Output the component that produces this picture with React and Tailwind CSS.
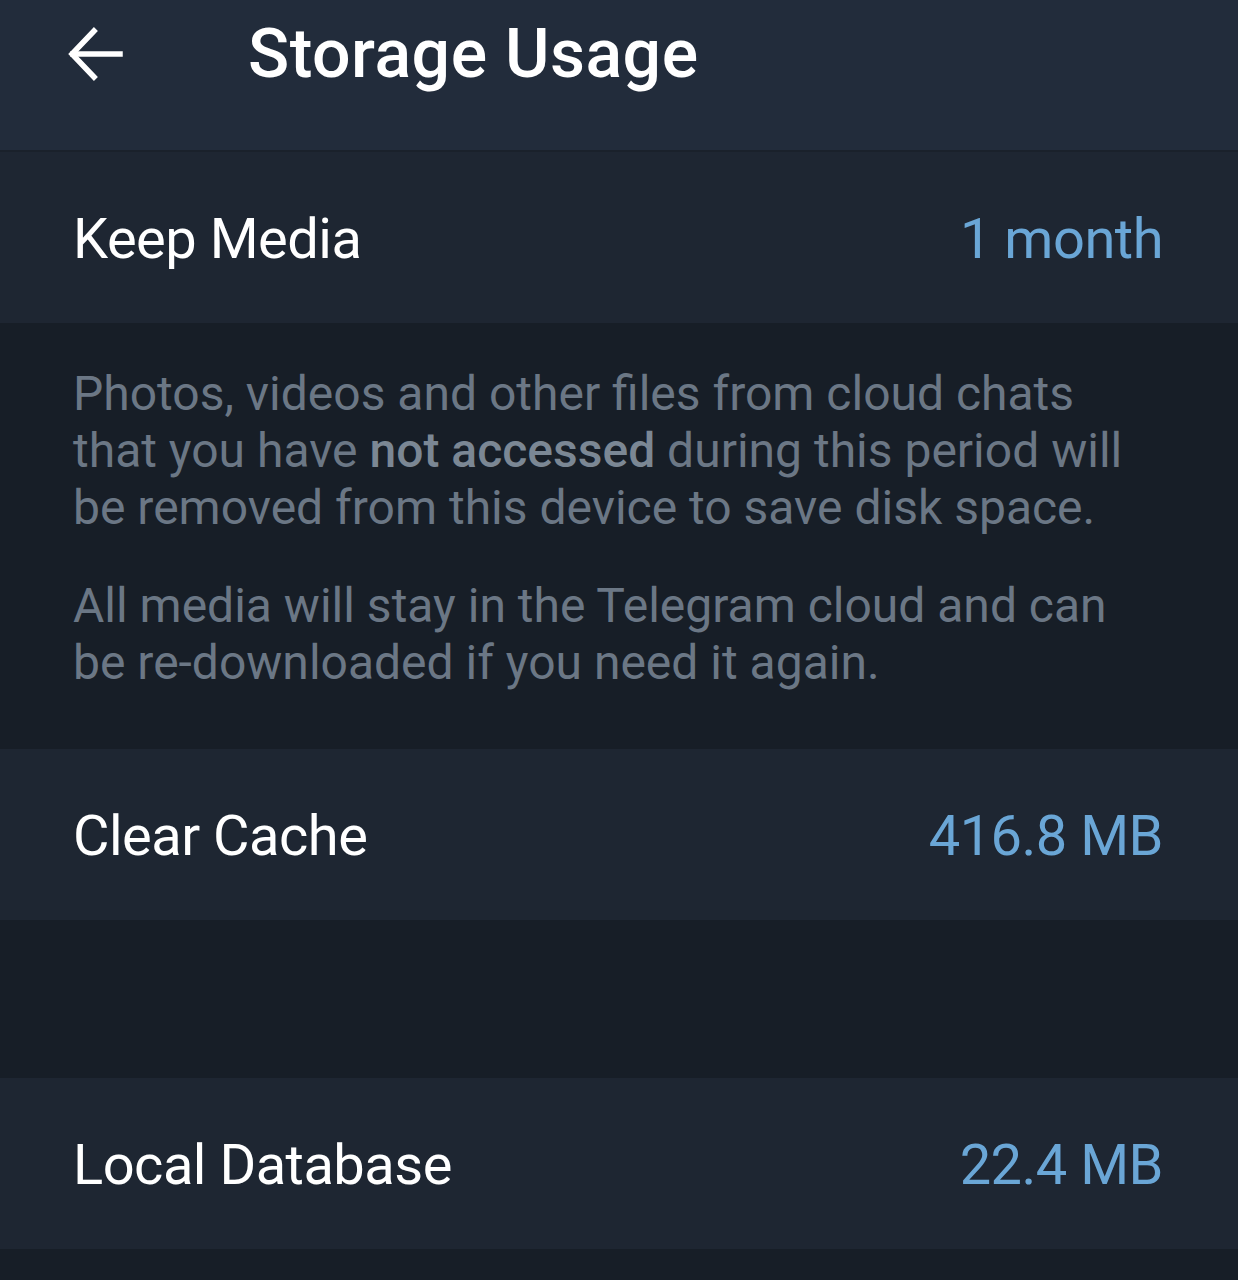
import React from "react";

const Row = ({ label, value }) => (
  <div className="flex h-[171px] items-center justify-between bg-[#1e2632] pl-[73px] pr-[75px]">
    <span className="pt-[3px] text-[56px] tracking-[-0.5px] text-white">{label}</span>
    <span className="pt-[3px] text-[56px] tracking-[-0.5px] text-[#6aa6d6]">{value}</span>
  </div>
);

export default function App() {
  return (
    <div className="min-h-[1280px] bg-[#171e27] font-['Roboto',sans-serif]">
      {/* Header */}
      <div className="flex h-[150px] items-start bg-[#222c3b] pt-[20px]">
        <div className="ml-[64px] flex h-[68px] w-[62px] items-center justify-center">
          <svg width="58" height="56" viewBox="0 0 58 56" fill="none" stroke="white" strokeWidth="5.5" strokeLinecap="square">
            <path d="M7 28 H54" />
            <path d="M28 5 L6 28 L28 51" strokeLinejoin="miter" />
          </svg>
        </div>
        <h1 className="ml-[122px] text-[68px] font-medium leading-[68px] tracking-[0.5px] text-white">
          Storage Usage
        </h1>
      </div>

      <div className="h-[2px] bg-[#1a212b]" />
      <Row label="Keep Media" value="1 month" />

      {/* Info text */}
      <div className="whitespace-nowrap pb-[58px] pl-[73px] pt-[42px] text-[48px] leading-[57px] text-[#6b7785]">
        <p>
          Photos, videos and other files from cloud chats
          <br />
          that you have{" "}
          <span className="font-medium text-[#7b8794]">not accessed</span>{" "}
          during this period will
          <br />
          be removed from this device to save disk space.
        </p>
        <p className="mt-[41px]">
          All media will stay in the Telegram cloud and can
          <br />
          be re-downloaded if you need it again.
        </p>
      </div>

      <Row label="Clear Cache" value="416.8 MB" />
      <div className="h-[158px]" />
      <Row label="Local Database" value="22.4 MB" />
    </div>
  );
}
